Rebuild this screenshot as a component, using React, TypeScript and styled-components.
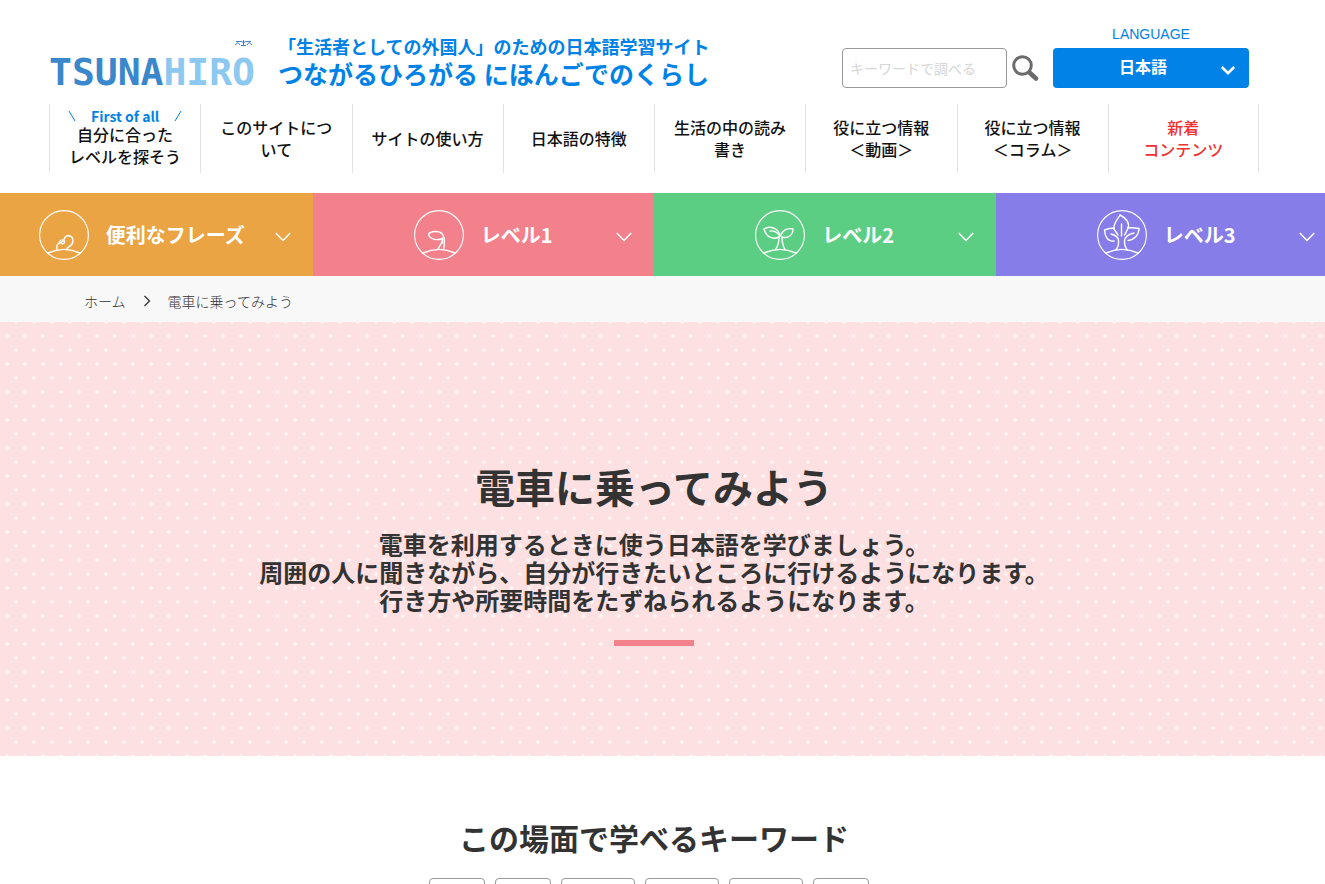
import React from "react";
import styled, { createGlobalStyle } from "styled-components";

const BLUE = "#0082e6";
const JP = '"Noto Sans CJK JP", "Noto Sans", sans-serif';

const GlobalStyle = createGlobalStyle`
  *, *::before, *::after { box-sizing: border-box; }
  body { margin: 0; background: #fff; color: #333; font-family: ${JP}; overflow-x: hidden; }
  h1, h2, p, ul, ol { margin: 0; padding: 0; }
  ul, ol { list-style: none; }
  a { color: inherit; text-decoration: none; }
  button, input, select { font-family: inherit; }
`;

const Header = styled.header`
  padding: 0 66px 20px 49px;
`;

const HeaderTop = styled.div`
  display: flex;
  align-items: flex-end;
  height: 104px;
  padding: 0 10px 16px 0;
`;

const LogoLink = styled.a`
  flex: none;
  display: block;
  width: 229px;
  height: 50px;
  svg { overflow: visible; }
`;

const LogoText = styled.text`
  font: 700 38px "DejaVu Sans Mono", monospace;
`;

const Tagline = styled.p`
  flex: 1;
  color: ${BLUE};
  font-weight: 700;
  white-space: nowrap;
`;

const TagSmall = styled.span`
  display: block;
  font-size: 18px;
  line-height: 24px;
`;

const TagLarge = styled.span`
  display: block;
  font-size: 25px;
  line-height: 30px;
`;

const SearchForm = styled.form`
  display: flex;
  align-items: center;
  gap: 4px;
  margin-right: 12px;
`;

const SearchInput = styled.input`
  width: 165px;
  height: 40px;
  padding: 0 7px;
  border: 1px solid #999;
  border-radius: 4px;
  font-size: 14px;
  outline: 0;
  &::placeholder { color: #d6d6d6; opacity: 1; }
`;

const SearchButton = styled.button`
  display: flex;
  padding: 0;
  border: 0;
  background: none;
  cursor: pointer;
`;

const Language = styled.div`
  display: flex;
  flex-direction: column;
  width: 196px;
`;

const LanguageLabel = styled.label`
  color: ${BLUE};
  font: 14px/20px "Liberation Sans", Arial, sans-serif;
  text-align: center;
  padding-bottom: 4px;
`;

const SelectWrap = styled.div`
  position: relative;
  svg { position: absolute; right: 13px; top: 17px; pointer-events: none; }
`;

const LanguageSelect = styled.select`
  display: block;
  appearance: none;
  width: 100%;
  height: 40px;
  padding: 0 16px 4px 0;
  border: 0;
  border-radius: 4px;
  background: ${BLUE};
  color: #fff;
  font-size: 16px;
  font-weight: 700;
  text-align: center;
  text-align-last: center;
`;

const NavList = styled.ul`
  display: grid;
  grid-template-columns: repeat(8, 1fr);
  height: 69px;
`;

const NavItem = styled.li<{ $accent?: boolean }>`
  display: flex;
  border-left: 1px solid #e2e2e2;
  color: ${(p) => (p.$accent ? "#f03232" : "#111")};
  &:last-child { border-right: 1px solid #e2e2e2; }
`;

const NavLink = styled.a`
  flex: 1;
  display: flex;
  flex-direction: column;
  justify-content: center;
  padding: 0 18px 2px;
  font-size: 16px;
  font-weight: 500;
  line-height: 22px;
  text-align: center;
  white-space: pre-line;
`;

const FirstOfAll = styled.span`
  display: flex;
  align-items: center;
  justify-content: space-between;
  color: ${BLUE};
  font-size: 14px;
  font-weight: 700;
  line-height: 14px;
`;

const LevelBand = styled.nav`
  display: flex;
  justify-content: center;
  padding-right: 17px;
  overflow: hidden;
`;

const LevelList = styled.ul`
  flex: none;
  display: grid;
  grid-template-columns: repeat(4, 1fr);
  width: 100%;
  min-width: 1366px;
`;

const LevelItem = styled.li<{ $color: string }>`
  background: ${(p) => p.$color};
`;

const LevelButton = styled.button`
  position: relative;
  display: flex;
  align-items: center;
  justify-content: center;
  gap: 17px;
  width: 100%;
  height: 83px;
  padding: 0;
  border: 0;
  background: none;
  color: #fff;
  font-size: 20px;
  font-weight: 700;
  cursor: pointer;
`;

const LevelArrow = styled.span`
  position: absolute;
  right: 22px;
  top: 39px;
  display: flex;
`;

const Breadcrumb = styled.nav`
  background: #f8f8f8;
  padding: 14px 84px 10px;
`;

const CrumbList = styled.ol`
  display: flex;
  align-items: center;
  gap: 17px;
  font-size: 14px;
  font-weight: 300;
  line-height: 22px;
  li { display: flex; align-items: center; gap: 17px; }
`;

const Hero = styled.section`
  padding: 136px 17px 110px 0;
  text-align: center;
  background-color: #fce0e2;
  background-image:
    radial-gradient(circle at 7px 14px, #fef3f3 2px, transparent 2px),
    radial-gradient(circle at 16px 0, #fef3f3 2px, transparent 2px),
    radial-gradient(circle at 16px 28px, #fef3f3 2px, transparent 2px);
  background-size: 18px 28px;
`;

const HeroTitle = styled.h1`
  font-size: 40px;
  font-weight: 700;
  line-height: 56px;
`;

const HeroLead = styled.p`
  padding-top: 16px;
  font-size: 24px;
  font-weight: 700;
  line-height: 28px;
`;

const HeroRule = styled.div`
  width: 80px;
  height: 6px;
  margin: 26px auto 0;
  background: #f3818c;
`;

const Keywords = styled.section`
  padding: 59px 17px 0 0;
  text-align: center;
`;

const KeywordsTitle = styled.h2`
  font-size: 30px;
  font-weight: 700;
  line-height: 44px;
`;

const KeywordList = styled.ul`
  display: flex;
  justify-content: center;
  gap: 10px;
  padding: 19px 10px 0 0;
`;

const KeywordButton = styled.button<{ $wide?: boolean }>`
  display: block;
  width: ${(p) => (p.$wide ? 74 : 56)}px;
  height: 40px;
  border: 1px solid #999;
  border-radius: 4px;
  background: #fff;
`;

function Chevron({ stroke }: { stroke: number }) {
  return (
    <svg width="16" height="11" fill="none" stroke="#fff" strokeWidth={stroke} aria-hidden="true">
      <path d={stroke > 2 ? "M1.800 2L8 8.200L14.200 2" : "M.8 1L8 8.400L15.200 1"} />
    </svg>
  );
}

function Logo() {
  return (
    <svg width="206" height="50" role="img" aria-label="TSUNAHIRO">
      <LogoText x="0" y="47" fill="#3a87cb">
        TSUNA<tspan fill="#8cc8f0">HIRO</tspan>
      </LogoText>
      <path
        d="M186 7L189 4.500L191 7M187 3.500H192L194.500 4.500L197 3.500H202M194.500 2V8M192 7.500H197M198 7L200 4.500L203 7"
        fill="none"
        stroke="#3f7fc6"
      />
    </svg>
  );
}

const PLANTS: Record<string, React.ReactNode> = {
  seed: (
    <>
      <path d="M18 39.500C17 35 19 33 22 32.500C26 32 24 26 29 25.500C34 25.500 35 31 33 34C31 37 28 37 27.500 39.500" />
      <path d="M20.500 33C20 30.500 23 29 25 30.500C26.500 32 25 34.500 22.500 33.500" />
    </>
  ),
  sprout: (
    <>
      <path d="M28.500 28.500C23 31 15 29 14.500 24C18 20 27 21 29 25C31 29 30.500 35 29.500 39.500" />
      <path d="M28.500 28.500C28.500 32 26 36 23.500 39.500M28.500 28V33" />
    </>
  ),
  leaves: (
    <>
      <path d="M25 26C24 18.500 15 15 9 19C11 27 18 30 24 27" />
      <path d="M26 25C28 19 34 18 38 19C38 25 33 29 27 27C27 32 28 36 30 39.500M24 27C24 32 23 36 20.500 39.500M15 21C19 20.500 22 22 25 26" />
    </>
  ),
  tree: (
    <>
      <path d="M17 19C16 14 20 10 23 5C29 8 33 13 31 18" />
      <path d="M17 18C13 18 10 19 7.500 20C8 27 11 32 17 31M31 18C35 17.500 39 18 42 18.500C42 25 37 30 31 30.500" />
      <path d="M24.500 14V26M17 19C18 21 20 23 21 25M31 18C30 21 28.500 23 27.500 25M14 24C18 25 21 27 21.500 30C22 35 21 38 18.500 40M37 23C32 24 28 27 27.500 31C27.500 36 28.500 38 30.500 40" />
    </>
  ),
};

function Plant({ name }: { name: string }) {
  return (
    <svg width="50" height="50" fill="none" stroke="#fff" strokeWidth="1.400" strokeLinecap="round" aria-hidden="true">
      <circle cx="25" cy="25" r="24.400" strokeWidth="1.100" />
      <path d="M9 43C19 38.500 31 38.500 41 43" />
      {PLANTS[name]}
    </svg>
  );
}

const NAV = [
  "このサイトについて",
  "サイトの使い方",
  "日本語の特徴",
  "生活の中の読み書き",
  "役に立つ情報\n＜動画＞",
  "役に立つ情報\n＜コラム＞",
];

const LEVELS = [
  { label: "便利なフレーズ", color: "#eaa443", plant: "seed" },
  { label: "レベル1", color: "#f3818c", plant: "sprout" },
  { label: "レベル2", color: "#5bce83", plant: "leaves" },
  { label: "レベル3", color: "#877de8", plant: "tree" },
];

const KEYWORDS = [false, false, true, true, true, false];

export default function App() {
  return (
    <>
      <GlobalStyle />
      <Header>
        <HeaderTop>
          <LogoLink href="#"><Logo /></LogoLink>
          <Tagline>
            <TagSmall>「生活者としての外国人」のための日本語学習サイト</TagSmall>
            <TagLarge>つながるひろがる にほんごでのくらし</TagLarge>
          </Tagline>
          <SearchForm>
            <SearchInput type="text" aria-label="キーワードで調べる" placeholder="キーワードで調べる" />
            <SearchButton type="button" aria-label="検索">
              <svg width="30" height="30" fill="none" stroke="#6b6b6b" aria-hidden="true">
                <circle cx="11.500" cy="12.500" r="8.800" strokeWidth="3" />
                <path d="M18.500 19.500L25 25.500" strokeWidth="4.600" strokeLinecap="round" />
              </svg>
            </SearchButton>
          </SearchForm>
          <Language>
            <LanguageLabel htmlFor="language">LANGUAGE</LanguageLabel>
            <SelectWrap>
              <LanguageSelect id="language"><option>日本語</option></LanguageSelect>
              <Chevron stroke={2.5} />
            </SelectWrap>
          </Language>
        </HeaderTop>
        <nav>
          <NavList>
            <NavItem>
              <NavLink href="#">
                <FirstOfAll>
                  <svg width="8" height="12" stroke={BLUE} aria-hidden="true"><path d="M1 1L7 11" /></svg>
                  First of all
                  <svg width="8" height="12" stroke={BLUE} aria-hidden="true"><path d="M7 1L1 11" /></svg>
                </FirstOfAll>
                <span>{"自分に合った\nレベルを探そう"}</span>
              </NavLink>
            </NavItem>
            {NAV.map((label) => (
              <NavItem key={label}><NavLink href="#">{label}</NavLink></NavItem>
            ))}
            <NavItem $accent><NavLink href="#">{"新着\nコンテンツ"}</NavLink></NavItem>
          </NavList>
        </nav>
      </Header>
      <LevelBand>
        <LevelList>
          {LEVELS.map((l) => (
            <LevelItem key={l.label} $color={l.color}>
              <LevelButton type="button">
                <Plant name={l.plant} />
                <span>{l.label}</span>
                <LevelArrow><Chevron stroke={1.5} /></LevelArrow>
              </LevelButton>
            </LevelItem>
          ))}
        </LevelList>
      </LevelBand>
      <Breadcrumb>
        <CrumbList>
          <li>
            <a href="#">ホーム</a>
            <svg width="8" height="12" fill="none" stroke="#333" strokeWidth="1.300" aria-hidden="true">
              <path d="M1.500 1L6.500 6L1.500 11" />
            </svg>
          </li>
          <li>電車に乗ってみよう</li>
        </CrumbList>
      </Breadcrumb>
      <main>
        <Hero>
          <HeroTitle>電車に乗ってみよう</HeroTitle>
          <HeroLead>
            電車を利用するときに使う日本語を学びましょう。<br />
            周囲の人に聞きながら、自分が行きたいところに行けるようになります。<br />
            行き方や所要時間をたずねられるようになります。
          </HeroLead>
          <HeroRule />
        </Hero>
        <Keywords>
          <KeywordsTitle>この場面で学べるキーワード</KeywordsTitle>
          <KeywordList>
            {KEYWORDS.map((wide, i) => (
              <li key={i}><KeywordButton type="button" $wide={wide} aria-label={`キーワード${i + 1}`} /></li>
            ))}
          </KeywordList>
        </Keywords>
      </main>
    </>
  );
}
